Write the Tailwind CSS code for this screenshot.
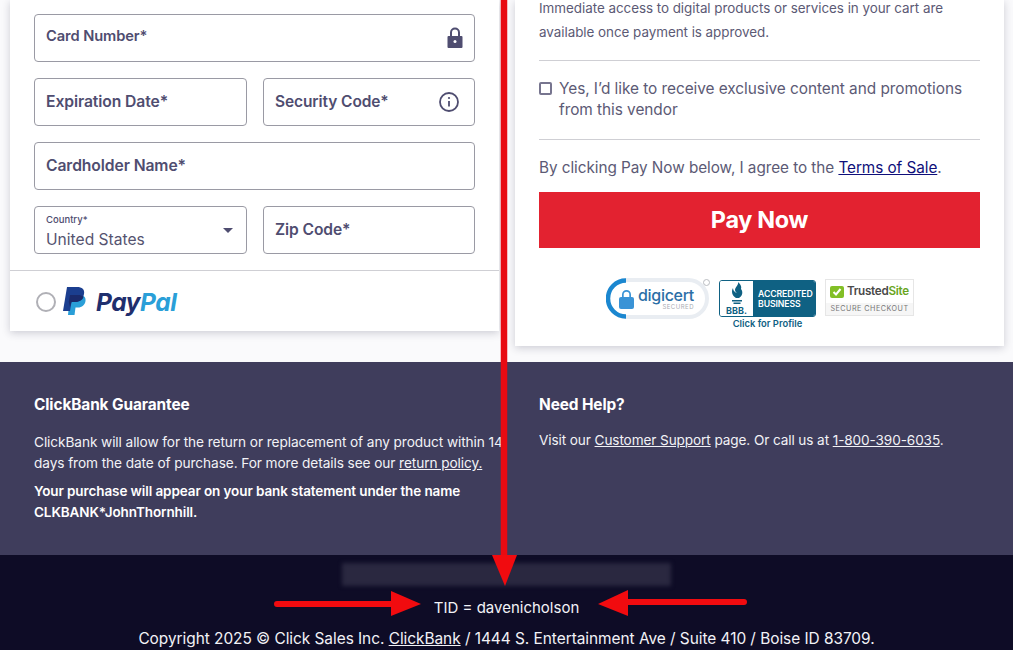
<!DOCTYPE html>
<html lang="en">
<head>
    <meta charset="UTF-8">
    <meta name="viewport" content="width=device-width, initial-scale=1.0">
    <title>Checkout</title>
    <script src="https://cdn.jsdelivr.net/npm/@tailwindcss/browser@4"></script>
</head>
<body class="bg-[#fafafc] font-['Inter',sans-serif] h-[650px] overflow-hidden relative">
    <!-- Payment and order cards -->
    <div class="flex items-start gap-4 px-[10px] pr-[9px] h-[362px]">
        <div class="w-[489px] h-[331px] bg-white shadow-[0_2px_8px_rgba(40,40,70,0.22)]">
            <div class="px-6 pt-[14px] flex flex-col gap-4">
                <div class="h-12 border border-[#9a9aa4] rounded flex justify-between pl-[11px] pr-[10px] pt-[11px]">
                    <span class="text-[14.700px] leading-5 font-semibold text-[#4f4d70] tracking-[-0.1px]">Card Number*</span>
                    <svg class="w-[18px] h-[22px] mt-[1px]" viewBox="0 0 18 22" fill="#4f4d70"><path d="M4 9V5.500a5 5 0 0 1 10 0V9h-2V5.500a3 3 0 0 0-6 0V9z"/><path d="M2.500 9h13a1 1 0 0 1 1 1v10a1 1 0 0 1-1 1h-13a1 1 0 0 1-1-1V10a1 1 0 0 1 1-1z"/><circle cx="9" cy="14.500" r="1.500" fill="#fff"/></svg>
                </div>
                <div class="flex gap-4">
                    <div class="w-[213px] h-12 border border-[#9a9aa4] rounded flex items-center px-[11px]">
                        <span class="text-[15.700px] font-semibold text-[#4f4d70] tracking-[-0.1px]">Expiration Date*</span>
                    </div>
                    <div class="w-[212px] h-12 border border-[#9a9aa4] rounded flex items-center justify-between pl-[11px] pr-[15px]">
                        <span class="text-[15.500px] font-semibold text-[#4f4d70] tracking-[-0.1px]">Security Code*</span>
                        <svg class="w-5 h-5" viewBox="0 0 20 20" fill="none" stroke="#4f4d70" stroke-width="1.800"><circle cx="10" cy="10" r="9"/><path d="M10 9v5.500"/><circle cx="10" cy="6" r="1.100" fill="#4f4d70" stroke="none"/></svg>
                    </div>
                </div>
                <div class="h-12 border border-[#9a9aa4] rounded flex items-center px-[11px]">
                    <span class="text-[15.700px] font-semibold text-[#4f4d70] tracking-[-0.1px]">Cardholder Name*</span>
                </div>
                <div class="flex gap-4">
                    <div class="w-[213px] h-12 border border-[#9a9aa4] rounded flex items-center justify-between pl-[11px] pr-[13px]">
                        <div class="flex flex-col -mt-[1px]">
                            <span class="text-[9.500px] leading-[11px] font-medium text-[#4f4d70]">Country*</span>
                            <span class="text-[15.600px] leading-[20px] mt-[5px] -mb-[5px] text-[#55536f]">United States</span>
                        </div>
                        <div class="w-0 h-0 border-x-[5px] border-x-transparent border-t-[5px] border-t-[#4f4d70]"></div>
                    </div>
                    <div class="w-[212px] h-12 border border-[#9a9aa4] rounded flex items-center px-[11px]">
                        <span class="text-[15.600px] font-semibold text-[#4f4d70] tracking-[-0.1px]">Zip Code*</span>
                    </div>
                </div>
            </div>
            <div class="mt-4 border-t border-[#cfcfd4] pl-[26px] pt-[15px] flex items-center">
                <div class="w-5 h-5 rounded-full border-2 border-[#b0b0b6] bg-white mt-[2px]"></div>
                <svg class="ml-[7px] w-6 h-[29px]" viewBox="0 0 24 29">
                    <path fill="#2a9fd8" d="M7 8h10c4 0 6 2.500 5.500 6-.6 4-3.500 6.500-7.500 6.500h-2.500L11.500 28H5z"/>
                    <path fill="#1b3e8f" d="M4 0h10c5 0 8 2.500 7 7-.9 5-4.500 8-9.500 8H8.500l-1.500 9H0z"/>
                    <path fill="#1a2a6c" d="M7 8h8c2 0 4 .6 5.500 2-1 3.500-4.500 5-9 5H8.500l-1.500 5-1.200-5z"/>
                </svg>
                <span class="ml-[9px] text-[24.500px] leading-7 font-bold italic tracking-[-0.5px] text-[#1f2f6e] mt-[2px]">Pay<span class="text-[#2a9fd8]">Pal</span></span>
            </div>
        </div>
        <div class="w-[489px] h-[346px] bg-white shadow-[0_2px_8px_rgba(40,40,70,0.22)] px-6">
            <p class="text-[13.450px] leading-6 text-[#5c5a75] -mt-1 tracking-[-0.05px]">Immediate access to digital products or services in your cart are available once payment is approved.</p>
            <div class="mt-4 border-t border-[#cfcfd4] pt-[17px] pb-[19px] flex items-start">
                <div class="w-[13px] h-[13px] mt-[4px] shrink-0 border-2 border-[#77758f] rounded-[2px]"></div>
                <p class="ml-[7px] text-[15.400px] leading-[21px] text-[#5c5a75] tracking-[-0.05px]">Yes, I’d like to receive exclusive content and promotions from this vendor</p>
            </div>
            <div class="border-t border-[#cfcfd4] pt-[18px] -mb-[1px] text-[15.300px] leading-5 text-[#5c5a75] tracking-[-0.05px]">By clicking Pay Now below, I agree to the <a class="underline text-[#0f0f7a]">Terms of Sale</a>.</div>
            <div class="mt-[15px] h-14 bg-[#e32230] flex items-center justify-center text-[23.400px] font-bold text-white tracking-[-0.3px]">Pay Now</div>
            <!-- Trust badges -->
            <div class="mt-[29px] flex items-start justify-center gap-[9px] pl-[1px]">
                <div class="relative w-[103px] h-[41px] mt-[1px] mr-[1px] rounded-full border-[4px] border-[#e9edf2] flex items-center">
                    <svg class="absolute -left-[4px] -top-[4px] w-6 h-[41px]" viewBox="0 0 24 41" fill="none"><path d="M20 2.500A18 18 0 0 0 20 38.500" stroke="#1b87d0" stroke-width="4.500"/></svg>
                    <svg class="ml-[9px] w-[15px] h-5" viewBox="0 0 15 20" fill="#3a93d6"><path d="M3 8V5.500a4.500 4.500 0 0 1 9 0V8h-1.700V5.500a2.800 2.800 0 0 0-5.600 0V8z"/><rect x="0" y="8" width="15" height="12" rx="2"/></svg>
                    <div class="ml-[4px] flex flex-col items-end">
                        <span class="text-[16px] leading-[15px] font-medium text-[#2b6ea6] tracking-[-0.3px]">digicert</span>
                        <span class="text-[6px] leading-[7px] text-[#a9adb3] tracking-[0.5px]">SECURED</span>
                    </div>
                    <div class="absolute -right-[5px] -top-[3px] w-[7px] h-[7px] rounded-full border border-[#b9bcc1]"></div>
                </div>
                <div class="flex flex-col items-center">
                    <div class="w-[97px] h-[37px] mt-[3px] flex rounded-[3px] border border-[#0f6183] overflow-hidden">
                        <div class="w-[33px] bg-white flex flex-col items-center text-[#0f6183]">
                            <svg class="w-[14px] h-[24px] mt-[1px]" viewBox="0 0 14 24" fill="#0f6183"><path d="M8 0c1 3-3 5-3 8 0 2 2 3 2 3s-4-1-4-5c-2 3-1 8 3 10h3c4-2 4-7 2-9 1-3-1-5-3-7zM2 18h10v1.500H2zM3.500 20.500h7v1.500h-7z"/></svg>
                            <span class="text-[9px] leading-[9px] font-bold">BBB.</span>
                        </div>
                        <div class="flex-1 bg-[#0f6183] text-white text-[8.700px] leading-[10px] font-semibold flex flex-col justify-center pl-[5px] tracking-[-0.1px]">
                            <span>ACCREDITED</span>
                            <span>BUSINESS</span>
                        </div>
                    </div>
                    <span class="mt-[2px] text-[9.400px] leading-[10px] font-semibold text-[#0f6183]">Click for Profile</span>
                </div>
                <div class="w-[89px] h-[37px] mt-[2px] border border-[#e6e6e6] bg-[#f6f6f6] flex flex-col">
                    <div class="h-[23px] bg-white flex items-center pl-[4px]">
                        <div class="w-[14px] h-[12px] rounded-[2px] bg-[#82bf26] flex items-center justify-center">
                            <svg class="w-[10px] h-[10px]" viewBox="0 0 10 10" fill="none" stroke="#fff" stroke-width="2"><path d="M1.500 5l2.500 2.500L8.500 2"/></svg>
                        </div>
                        <span class="ml-[3px] text-[11.700px] font-semibold tracking-[-0.3px] text-[#4a4a4a]">Trusted<span class="text-[#6aa51e]">Site</span></span>
                    </div>
                    <span class="text-[7.200px] leading-[12px] text-center tracking-[0.5px] text-[#777]">SECURE CHECKOUT</span>
                </div>
            </div>
        </div>
    </div>

    <!-- Guarantee and help -->
    <div class="h-[193px] bg-[#3f3d5c] text-white flex pt-[33px] px-[34px]">
        <div class="w-[505px] shrink-0">
            <h3 class="text-[15.400px] leading-5 font-bold tracking-[-0.1px]">ClickBank Guarantee</h3>
            <p class="mt-[17px] text-[13.700px] leading-[21px] text-[#f2f2f6] tracking-[-0.1px] w-[472px]">ClickBank will allow for the return or replacement of any product within 14 days from the date of purchase. For more details see our <a class="underline">return policy.</a></p>
            <p class="mt-[7px] text-[13.500px] leading-[21px] font-semibold tracking-[-0.1px] w-[472px]">Your purchase will appear on your bank statement under the name CLKBANK*JohnThornhill.</p>
        </div>
        <div>
            <h3 class="text-[15.400px] leading-5 font-bold tracking-[-0.1px]">Need Help?</h3>
            <p class="mt-[15px] text-[13.600px] leading-[21px] text-[#f2f2f6] tracking-[-0.1px]">Visit our <a class="underline">Customer Support</a> page. Or call us at <a class="underline">1-800-390-6035</a>.</p>
        </div>
    </div>

    <!-- Bottom bar -->
    <div class="h-[95px] bg-[#0e0c26] text-white flex flex-col items-center pt-[8px]">
        <div class="w-[329px] h-[23px] bg-[#2a2840] blur-[2px]"></div>
        <div class="mt-[12px] text-[15px] leading-5 text-[#f2f2f6]">TID = davenicholson</div>
        <div class="mt-[11px] text-[15.450px] leading-5 text-[#f2f2f6] tracking-[-0.05px] whitespace-nowrap">Copyright 2025 © Click Sales Inc. <a class="underline">ClickBank</a> / 1444 S. Entertainment Ave / Suite 410 / Boise ID 83709.</div>
    </div>

    <!-- Red arrows drawn over the page -->
    <svg class="absolute left-0 top-0 w-[1013px] h-[650px] pointer-events-none" viewBox="0 0 1013 650">
        <path d="M504 0V560" stroke="#e80b12" stroke-width="6.500"/>
        <path d="M492 555H517L505 586z" fill="#f10b0f"/>
        <path d="M277 604H395" stroke="#f10b0f" stroke-width="6" stroke-linecap="round"/>
        <path d="M391 591L421 604L391 616z" fill="#f10b0f"/>
        <path d="M744 602H625" stroke="#f10b0f" stroke-width="6" stroke-linecap="round"/>
        <path d="M628 590L598 604L628 616z" fill="#f10b0f"/>
    </svg>
</body>
</html>
